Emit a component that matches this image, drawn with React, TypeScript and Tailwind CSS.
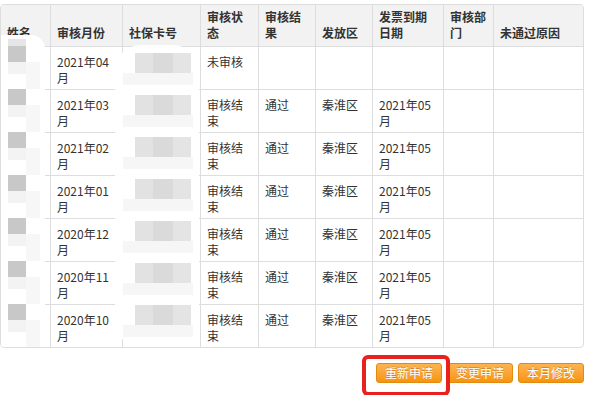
import React from "react";

type Row = {
  month: string;
  status: string[];
  result: string;
  area: string;
  due: string[];
};

const HEAD: string[][] = [
  ["姓名"],
  ["审核月份"],
  ["社保卡号"],
  ["审核状", "态"],
  ["审核结", "果"],
  ["发放区"],
  ["发票到期", "日期"],
  ["审核部", "门"],
  ["未通过原因"],
];

const ROWS: Row[] = [
  { month: "2021年04", status: ["未审核"], result: "", area: "", due: [] },
  { month: "2021年03", status: ["审核结", "束"], result: "通过", area: "秦淮区", due: ["2021年05", "月"] },
  { month: "2021年02", status: ["审核结", "束"], result: "通过", area: "秦淮区", due: ["2021年05", "月"] },
  { month: "2021年01", status: ["审核结", "束"], result: "通过", area: "秦淮区", due: ["2021年05", "月"] },
  { month: "2020年12", status: ["审核结", "束"], result: "通过", area: "秦淮区", due: ["2021年05", "月"] },
  { month: "2020年11", status: ["审核结", "束"], result: "通过", area: "秦淮区", due: ["2021年05", "月"] },
  { month: "2020年10", status: ["审核结", "束"], result: "通过", area: "秦淮区", due: ["2021年05", "月"] },
];

const GRID = "grid grid-cols-[49px_72px_78px_58px_57px_57px_71px_50px_90px]";

function Lines({ lines }: { lines: string[] }) {
  return (
    <>
      {lines.map((l, i) => (
        <span key={i} className="block whitespace-nowrap">
          {l}
        </span>
      ))}
    </>
  );
}

function Cell({ first, children }: { first?: boolean; children?: React.ReactNode }) {
  return (
    <div className={first ? "px-[6px] pt-[7px] pb-[3px] h-[42px]" : "border-l border-[#dddddd] px-[6px] pt-[7px] pb-[3px] h-[42px]"}>
      {children}
    </div>
  );
}

function Button({ label }: { label: string }) {
  return (
    <button
      type="button"
      className="w-[66px] h-[20px] rounded-[3px] border border-[#e08a10] bg-gradient-to-b from-[#fbb450] to-[#f89406] text-white text-[12px] leading-[18px] [text-shadow:0_-1px_0_rgba(0,0,0,0.2)]"
    >
      {label}
    </button>
  );
}

export default function App() {
  return (
    <div className="w-[595px] h-[395px] overflow-hidden bg-white pt-[4px] text-[12px] leading-[16px] text-[#333333] font-['Noto_Sans_CJK_SC','Noto_Sans',sans-serif]">
      <div className="relative w-[584px] border border-[#dddddd] rounded-[4px] overflow-hidden">
        <div className={`${GRID} bg-[#f2f2f2] font-bold h-[41px]`}>
          {HEAD.map((h, i) => (
            <div
              key={i}
              className={
                i === 0
                  ? "flex flex-col justify-end px-[6px] pt-[4px] pb-[5px]"
                  : "flex flex-col justify-end border-l border-[#dddddd] px-[6px] pt-[4px] pb-[5px]"
              }
            >
              <Lines lines={h} />
            </div>
          ))}
        </div>

        {ROWS.map((r, i) => (
          <div key={i} className={`${GRID} border-t border-[#dddddd]`}>
            <Cell first />
            <Cell>
              <Lines lines={[r.month, "月"]} />
            </Cell>
            <Cell />
            <Cell>
              <Lines lines={r.status} />
            </Cell>
            <Cell>{r.result}</Cell>
            <Cell>{r.area}</Cell>
            <Cell>
              <Lines lines={r.due} />
            </Cell>
            <Cell />
            <Cell />
          </div>
        ))}

        {/* redacted names */}
        <div className="absolute left-0 top-[30px] w-[44px] h-[312px] bg-white rounded-tr-[14px] flex flex-col">
          <div className="h-[11px] ml-[7px] w-[18px] bg-[#e6e6e6] mt-[4px]" />
          {ROWS.map((_, i) => (
            <div key={i} className="h-[43px] flex flex-col">
              <div className="ml-[7px] w-[18px] h-[16px] bg-[#c8c8c8]" />
              <div className="flex">
                <div className="ml-[7px] w-[18px] h-[12px] bg-[#f3f3f3]" />
                <div className="w-[14px] h-[27px] bg-[#f7f7f7]" />
              </div>
            </div>
          ))}
        </div>

        {/* redacted card numbers */}
        <div className="absolute left-[114px] top-[40px] w-[84px] h-[302px] bg-white/95 rounded-[26px] flex flex-col pt-[8px]">
          {ROWS.map((_, i) => (
            <div key={i} className="h-[43px] flex flex-col">
              <div className="flex ml-[20px] h-[20px]">
                <div className="w-[18px] bg-[#e2e2e2]" />
                <div className="w-[20px] bg-[#dadada]" />
                <div className="w-[18px] bg-[#e4e4e4]" />
              </div>
              <div className="ml-[8px] w-[70px] h-[12px] bg-[#f6f6f6]" />
            </div>
          ))}
        </div>
      </div>

      <div className="w-[584px] mt-[15px] flex justify-end gap-[5px]">
        <span className="relative">
          <Button label="重新申请" />
          <span className="absolute -left-[14px] -top-[8px] -right-[8px] -bottom-[13px] border-[4px] border-[#e8211d] rounded-[6px] pointer-events-none" />
        </span>
        <Button label="变更申请" />
        <Button label="本月修改" />
      </div>
    </div>
  );
}
